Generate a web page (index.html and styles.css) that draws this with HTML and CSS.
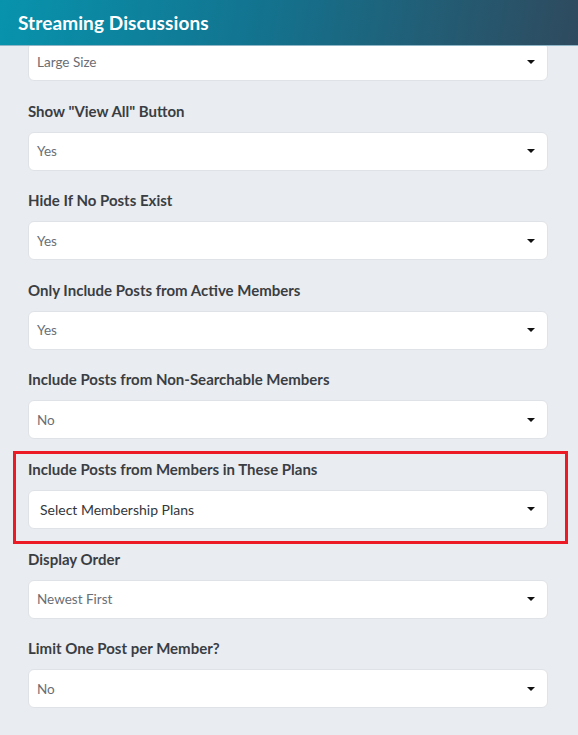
FILE: index.html
```html
<!DOCTYPE html>
<html lang="en">
<head>
<meta charset="utf-8">
<title>Streaming Discussions</title>
<link rel="stylesheet" href="styles.css">
</head>
<body>
<div class="panel">
  <header class="panel-header">
    <h1 class="panel-title">Streaming Discussions</h1>
  </header>
  <div class="panel-body">
    <div class="field">
      <div class="select"><span class="select-value">Large Size</span><span class="caret"></span></div>
    </div>
    <div class="field">
      <label class="field-label">Show "View All" Button</label>
      <div class="select"><span class="select-value">Yes</span><span class="caret"></span></div>
    </div>
    <div class="field">
      <label class="field-label">Hide If No Posts Exist</label>
      <div class="select"><span class="select-value">Yes</span><span class="caret"></span></div>
    </div>
    <div class="field">
      <label class="field-label">Only Include Posts from Active Members</label>
      <div class="select"><span class="select-value">Yes</span><span class="caret"></span></div>
    </div>
    <div class="field">
      <label class="field-label">Include Posts from Non-Searchable Members</label>
      <div class="select"><span class="select-value">No</span><span class="caret"></span></div>
    </div>
    <div class="field field-highlight">
      <label class="field-label">Include Posts from Members in These Plans</label>
      <div class="select select-multi"><span class="select-value">Select Membership Plans</span><span class="caret"></span></div>
    </div>
    <div class="field">
      <label class="field-label">Display Order</label>
      <div class="select"><span class="select-value">Newest First</span><span class="caret"></span></div>
    </div>
    <div class="field">
      <label class="field-label">Limit One Post per Member?</label>
      <div class="select"><span class="select-value">No</span><span class="caret"></span></div>
    </div>
  </div>
</div>
</body>
</html>
```
FILE: styles.css
```css
* { box-sizing: border-box; }
html, body { margin: 0; padding: 0; }
body {
  background: #e9ecf1;
  font-family: "Lato", "Noto Sans", sans-serif;
  width: 578px;
  height: 735px;
  overflow: hidden;
}
.panel { width: 578px; }
.panel-header {
  position: relative;
  z-index: 2;
  height: 46px;
  background: linear-gradient(100deg, #0893ad 0%, #13738f 45%, #2f4a5e 100%);
  border-bottom: 1px solid #8fb6c6;
  display: flex;
  align-items: center;
  padding-left: 18px;
}
.panel-title {
  margin: 0;
  color: #ffffff;
  font-size: 19px;
  font-weight: 700;
  letter-spacing: 0.1px;
}
.panel-body {
  margin-top: -4px;
  padding: 0 30px 0 28px;
  display: flex;
  flex-direction: column;
  gap: 19.6px;
}
.field {
  position: relative;
  display: flex;
  flex-direction: column;
}
.field-label {
  display: block;
  height: 20px;
  line-height: 21px;
  margin-bottom: 11px;
  font-size: 15px;
  font-weight: 700;
  color: #3a3e43;
}
.select {
  height: 39px;
  background: #ffffff;
  border: 1px solid #dfe2e6;
  border-radius: 6px;
  display: flex;
  align-items: center;
  justify-content: space-between;
  padding: 0 12px 0 8px;
}
.select-value {
  font-size: 13.5px;
  font-weight: 400;
  color: #6a6e74;
}
.select-multi { padding-left: 11px; }
.select-multi .select-value {
  font-size: 14px;
  color: #33373b;
}
.caret {
  width: 0;
  height: 0;
  border-left: 4px solid transparent;
  border-right: 4px solid transparent;
  border-top: 4px solid #111111;
}
.field-highlight::after {
  content: "";
  position: absolute;
  top: -8px;
  left: -15px;
  right: -20px;
  bottom: -15px;
  border: 3px solid #ec1a24;
  pointer-events: none;
}
```
